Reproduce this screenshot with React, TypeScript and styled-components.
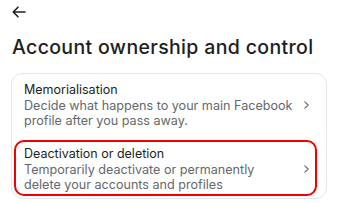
import styled, { createGlobalStyle } from "styled-components";

const GlobalStyle = createGlobalStyle`
  html, body {
    margin: 0;
    padding: 0;
    background: #ffffff;
  }
  body {
    font-family: Inter, "Noto Sans", sans-serif;
    color: #1c1e21;
    -webkit-font-smoothing: antialiased;
  }
`;

const Page = styled.div`
  width: 337px;
  height: 203px;
  overflow: hidden;
  padding: 4px 10px 0 11px;
  box-sizing: border-box;
  display: flex;
  flex-direction: column;
`;

const BackButton = styled.button`
  display: flex;
  align-items: center;
  width: 20px;
  height: 16px;
  padding: 0;
  margin: 0 0 0 1px;
  border: none;
  background: none;
  color: #1c1e21;
  cursor: pointer;
`;

const Title = styled.h1`
  margin: 15px 0 0 1px;
  font-size: 19.5px;
  line-height: 24px;
  font-weight: 500;
  letter-spacing: 0.35px;
  color: #1c1e21;
`;

const Card = styled.div`
  margin-top: 14px;
  border: 1px solid #e4e6eb;
  border-radius: 11px;
  padding: 2px 9px 2px 2px;
  display: flex;
  flex-direction: column;
  gap: 8px;
`;

const Row = styled.div<{ $selected?: boolean }>`
  display: flex;
  align-items: center;
  gap: 10px;
  padding: 3px 6px 2px 8px;
  border-radius: 10px;
  border: 2px solid ${(p) => (p.$selected ? "#f00000" : "transparent")};
  cursor: pointer;
`;

const RowText = styled.div`
  flex: 1;
  display: flex;
  flex-direction: column;
`;

const RowTitle = styled.span`
  font-size: 12.5px;
  line-height: 17px;
  font-weight: 400;
  color: #1c1e21;
`;

const RowDesc = styled.span`
  font-size: 12.6px;
  line-height: 15px;
  color: #65676b;
`;

const Chevron = styled.svg`
  flex: none;
  width: 5px;
  height: 8px;
  color: #65676b;
`;

const items = [
  {
    title: "Memorialisation",
    desc: "Decide what happens to your main Facebook profile after you pass away.",
  },
  {
    title: "Deactivation or deletion",
    desc: "Temporarily deactivate or permanently delete your accounts and profiles",
    selected: true,
  },
];

export default function App() {
  return (
    <>
      <GlobalStyle />
      <Page>
        <BackButton aria-label="Back">
          <svg width="14" height="12" viewBox="0 0 14 12" fill="none">
            <path
              d="M13 6H1.5M6 1.2L1.2 6L6 10.8"
              stroke="currentColor"
              strokeWidth="1.6"
              strokeLinecap="round"
              strokeLinejoin="round"
            />
          </svg>
        </BackButton>
        <Title>Account ownership and control</Title>
        <Card>
          {items.map((item) => (
            <Row key={item.title} $selected={item.selected}>
              <RowText>
                <RowTitle>{item.title}</RowTitle>
                <RowDesc>{item.desc}</RowDesc>
              </RowText>
              <Chevron viewBox="0 0 5 8" fill="none">
                <path
                  d="M0.8 0.8L4.2 4L0.8 7.2"
                  stroke="currentColor"
                  strokeWidth="1.1"
                  strokeLinecap="round"
                  strokeLinejoin="round"
                />
              </Chevron>
            </Row>
          ))}
        </Card>
      </Page>
    </>
  );
}
